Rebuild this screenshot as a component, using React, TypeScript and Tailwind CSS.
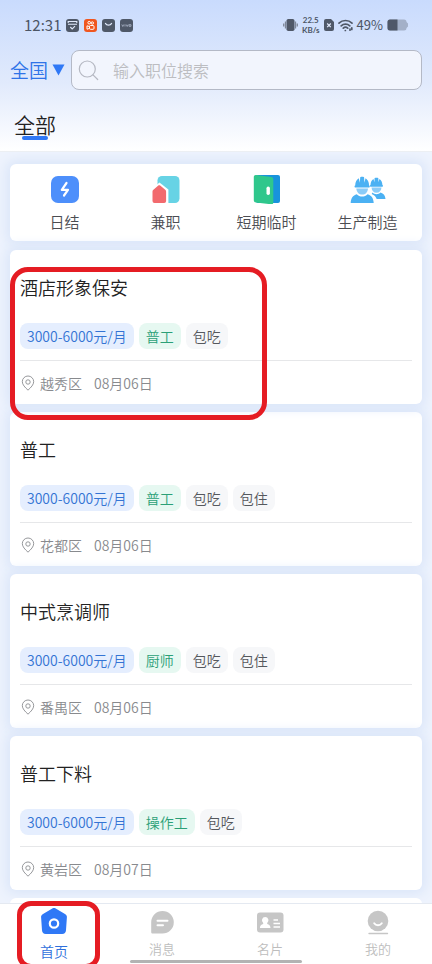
import type { ReactNode } from "react";

type Job = {
  title: string;
  salary: string;
  type: string;
  perks: string[];
  area: string;
  date: string;
  marked?: boolean;
};

const JOBS: Job[] = [
  { title: "酒店形象保安", salary: "3000-6000元/月", type: "普工", perks: ["包吃"], area: "越秀区", date: "08月06日", marked: true },
  { title: "普工", salary: "3000-6000元/月", type: "普工", perks: ["包吃", "包住"], area: "花都区", date: "08月06日" },
  { title: "中式烹调师", salary: "3000-6000元/月", type: "厨师", perks: ["包吃", "包住"], area: "番禺区", date: "08月06日" },
  { title: "普工下料", salary: "3000-6000元/月", type: "操作工", perks: ["包吃"], area: "黄岩区", date: "08月07日" },
];

const CATEGORIES: { label: string; icon: ReactNode }[] = [
  { label: "日结", icon: <BoltIcon /> },
  { label: "兼职", icon: <HouseIcon /> },
  { label: "短期临时", icon: <DoorIcon /> },
  { label: "生产制造", icon: <WorkersIcon /> },
];

const TABS: { label: string; icon: ReactNode; active?: boolean }[] = [
  { label: "首页", icon: <HomeTabIcon />, active: true },
  { label: "消息", icon: <MessageTabIcon /> },
  { label: "名片", icon: <CardTabIcon /> },
  { label: "我的", icon: <ProfileTabIcon /> },
];

function BoltIcon() {
  return (
    <svg className="h-7 w-9" viewBox="0 0 36 28" fill="none" aria-hidden="true">
      <rect x="4" y="0" width="28" height="27" rx="7" fill="#4d8ffb" />
      <path d="M19.500 7 14.800 13.800H21l-4 5.700" stroke="#fff" strokeWidth="2.200" strokeLinecap="round" strokeLinejoin="round" />
    </svg>
  );
}

function HouseIcon() {
  return (
    <svg className="h-7 w-9" viewBox="0 0 36 28" aria-hidden="true">
      <rect x="9.500" y="0" width="22" height="27" rx="4.500" fill="#67d3e5" />
      <path d="M3 28V13.500l8.500-6.900 8.900 7V28z" fill="#fff" />
      <path d="M4.500 15.600c0-.8.3-1.400.9-1.900l4.900-4.100c.6-.5 1.300-.5 1.900 0l5 4.100c.6.500.9 1.100.9 1.900V25a2 2 0 0 1-2 2H6.500a2 2 0 0 1-2-2z" fill="#f26a6e" />
    </svg>
  );
}

function DoorIcon() {
  return (
    <svg className="-mt-1 h-8 w-9" viewBox="0 0 36 32" aria-hidden="true">
      <rect x="7" y="3" width="24" height="28" rx="2" fill="#1893dc" />
      <path d="M4.800 5c0-1.400 1-2.200 2.400-2l15.100 2.100c1.300.2 2 1 2 2.300v23.100c0 1.300-.9 2-2.200 1.800L6.800 30.400c-1.300-.2-2-1-2-2.200z" fill="#2fc78c" />
      <rect x="17.500" y="14.500" width="3.400" height="8.500" rx="1.700" fill="#fff" />
    </svg>
  );
}

function WorkersIcon() {
  return (
    <svg className="h-7 w-9" viewBox="0 0 36 28" aria-hidden="true">
      <g fill="#4bb1f3">
        <path d="M20.500 9c.1-2.800 1.200-4.900 3-5.900l.9 3.200.2-4.300c1.100-.5 2.600-.5 3.700 0l.2 4.300.9-3.200c1.800 1 2.900 3.100 3 5.900.8.100.8 1.600 0 1.700H20.500c-.7-.1-.7-1.600 0-1.700z" />
        <path d="M21.500 11.500h10c-.3 3.200-2 5.300-5 5.300s-4.700-2.100-5-5.300z" fill="#8bccf8" />
        <path d="M22.500 16.500c2 2.300 6 2.300 8 0 3.100.8 4.800 3.300 5 6.500h-8.800c-.8-2.100-2.300-3.900-5-5z" />
      </g>
      <g fill="#4bb1f3">
        <path d="M5.200 9.500c.1-3.500 1.400-6 3.600-7.200l1.100 4.400.3-5.500c1.200-.6 2.700-.6 3.900 0l.3 5.500 1.100-4.400c2.200 1.200 3.500 3.700 3.600 7.200.9.100.9 1.900 0 2H5.200c-.9-.1-.9-1.900 0-2z" />
        <path d="M6.300 12.400h11.700c-.3 3.700-2.500 6.100-5.800 6.100s-5.600-2.400-5.900-6.100z" fill="#8bccf8" />
        <path d="M6.800 18.200c2.800 3.100 8 3.100 10.800 0 3.900 1 6 4.200 6.100 8.800H.7c.1-4.600 2.200-7.800 6.100-8.800z" />
      </g>
    </svg>
  );
}

function PinIcon() {
  return (
    <svg className="h-4 w-4 shrink-0" viewBox="0 0 16 16" fill="none" stroke="#8b8d91" strokeWidth="0.900" aria-hidden="true">
      <path d="M8 15.200C5 12.400 2.300 9.600 2.300 6.700a5.700 5.700 0 0 1 11.400 0c0 2.900-2.700 5.700-5.700 8.500z" />
      <circle cx="8" cy="7" r="2.200" />
    </svg>
  );
}

function HomeTabIcon() {
  return (
    <svg className="h-7 w-7" viewBox="0 0 28 28" aria-hidden="true">
      <path d="M12.300 1.500c1-.6 2.400-.6 3.400 0l9.300 5.400c1.400.8 2 1.800 1.900 3.300l-.9 13c-.1 2.400-1.500 3.800-3.800 3.800H5.800C3.500 27 2.100 25.600 2 23.200l-.9-13C1 8.700 1.600 7.700 3 6.900z" fill="#2f78f6" />
      <circle cx="14" cy="16.500" r="4.200" fill="none" stroke="#fff" strokeWidth="2.200" />
    </svg>
  );
}

function MessageTabIcon() {
  return (
    <svg className="h-7 w-7" viewBox="0 0 28 28" aria-hidden="true">
      <path d="M14.500 4a11.300 11.300 0 0 1 0 22.600H4.800c-1 0-1.600-.6-1.600-1.600v-9.700A11.300 11.300 0 0 1 14.500 4z" fill="#c6c6c6" />
      <path d="M9.500 13.700h10M9.500 18.200h5.500" stroke="#fff" strokeWidth="2" strokeLinecap="round" />
    </svg>
  );
}

function CardTabIcon() {
  return (
    <svg className="h-7 w-7" viewBox="0 0 28 28" aria-hidden="true">
      <rect x="1" y="5.500" width="26.500" height="20" rx="3" fill="#c6c6c6" />
      <path d="M9.200 10a3.300 3.300 0 0 1 2 5.900v1c1.900.6 3.300 1.500 3.300 4.100H3.900c0-2.600 1.400-3.500 3.300-4.100v-1a3.300 3.300 0 0 1 2-5.900z" fill="#fff" />
      <path d="M17.500 13h4.500M17.500 16.500h6.500M17.500 20h6.500" stroke="#fff" strokeWidth="1.400" />
    </svg>
  );
}

function ProfileTabIcon() {
  return (
    <svg className="h-7 w-7" viewBox="0 0 28 28" aria-hidden="true">
      <circle cx="14" cy="14" r="10.300" fill="#c6c6c6" />
      <path d="M10.200 16.300c1.700 2.600 5.900 2.600 7.600 0" fill="none" stroke="#fff" strokeWidth="1.900" strokeLinecap="round" />
      <path d="M5 26.500h18.500" stroke="#c6c6c6" strokeWidth="1.400" strokeLinecap="round" />
    </svg>
  );
}

function StatusBar() {
  return (
    <div className="flex h-[50px] items-center justify-between px-6 font-normal text-[#4c5565]">
      <div className="flex items-center gap-[5px]">
        <span className="text-[15px] leading-5">12:31</span>
        <svg className="h-[13px] w-[13px]" viewBox="0 0 13 13" aria-hidden="true">
          <rect width="13" height="13" rx="3" fill="#4f5868" />
          <path d="M2.200 4V2.500h8.600V4M2 5.300h9M4.300 8l1.900 1.900L9 7.200" fill="none" stroke="#e1e9fb" strokeWidth="1.100" />
        </svg>
        <svg className="h-[13px] w-[13px]" viewBox="0 0 13 13" aria-hidden="true">
          <rect width="13" height="13" rx="3" fill="#f0561f" />
          <g fill="none" stroke="#fff" strokeWidth="1">
            <circle cx="5.200" cy="3.700" r="1.300" />
            <circle cx="8.300" cy="4" r="1.200" />
            <rect x="5.500" y="6.500" width="4.500" height="3.800" rx="1" />
            <path d="M5.500 7.600 3 6.800v3.400l2.500-.8" />
          </g>
        </svg>
        <svg className="h-[13px] w-[13px]" viewBox="0 0 13 13" aria-hidden="true">
          <rect width="13" height="13" rx="3" fill="#4f5868" />
          <path d="M3.500 4.500c1.200 2.200 4.800 2.200 6 0" fill="none" stroke="#e1e9fb" strokeWidth="1.400" strokeLinecap="round" />
        </svg>
        <svg className="h-[13px] w-[13px]" viewBox="0 0 13 13" aria-hidden="true">
          <rect width="13" height="13" rx="3" fill="#4f5868" />
          <path d="m1.800 5.500 1 2 1-2M5 5.500v2M6.200 5.500l1 2 1-2M9 5.700h2v1.600H9z" fill="none" stroke="#b9c3d6" strokeWidth="0.700" />
        </svg>
      </div>

      <div className="flex items-center gap-1">
        <svg className="h-[14px] w-[15px]" viewBox="0 0 15 14" aria-hidden="true">
          <rect x="3.500" y="1" width="8" height="12" rx="1.800" fill="#4f5868" />
          <path d="M2.500 3.500v7M12.500 3.500v7M.7 5.500v3M14.300 5.500v3" stroke="#7d8799" strokeWidth="1.300" />
        </svg>
        <div className="flex flex-col items-center font-['Lato',sans-serif] text-[8px] leading-[10px] font-bold">
          <span>22.5</span>
          <span>KB/s</span>
        </div>
        <svg className="h-[12px] w-[10px]" viewBox="0 0 10 12" aria-hidden="true">
          <path d="M2 0h5l3 3v7a2 2 0 0 1-2 2H2a2 2 0 0 1-2-2V2a2 2 0 0 1 2-2z" fill="#4f5868" />
          <path d="m3.200 4.500 3.600 3.600m0-3.600L3.200 8.100" stroke="#e1e9fb" strokeWidth="1.200" />
        </svg>
        <svg className="h-[13px] w-[15px]" viewBox="0 0 15 13" fill="none" stroke="#4f5868" strokeWidth="1.700" strokeLinecap="round" aria-hidden="true">
          <path d="M1 4.200c3.600-3.600 9.400-3.600 13 0M3.200 6.800c2.400-2.300 6.200-2.300 8.600 0M5.300 9.200c1.300-1.200 3.100-1.200 4.400 0" />
          <path d="M7.300 11.500h.1M12 10v1.200M13.800 8.800v1.700" />
        </svg>
        <span className="text-[13px] leading-5">49%</span>
        <svg className="h-[12px] w-[21px]" viewBox="0 0 21 12" aria-hidden="true">
          <path d="M3 .5h14a2.500 2.500 0 0 1 2.500 2.500l1.500 1.500v3L19.500 9a2.500 2.500 0 0 1-2.500 2.500H3A2.500 2.500 0 0 1 .5 9V3A2.500 2.500 0 0 1 3 .5z" fill="#a3b0c8" />
          <path d="M3 .5h7.500v11H3A2.500 2.500 0 0 1 .5 9V3A2.500 2.500 0 0 1 3 .5z" fill="#4f5868" />
        </svg>
      </div>
    </div>
  );
}

function Header() {
  return (
    <header className="h-[151px] shrink-0 bg-linear-to-b from-[#c9dbfd] via-[#e1eafc] via-55% to-white">
      <StatusBar />
      <div className="flex items-center gap-1.5 px-2.5">
        <button type="button" className="flex shrink-0 items-center gap-1 text-[19px] leading-7 text-[#2f73e8]">
          全国
          <svg className="h-3 w-[13px]" viewBox="0 0 13 12" aria-hidden="true">
            <path d="M.5.500h12L6.500 11.500z" fill="#2f78f6" />
          </svg>
        </button>
        <label className="flex h-10 min-w-0 flex-1 items-center gap-3.5 rounded-lg border border-[#b4b9c6] bg-[#f2f5fd] px-1.5">
          <svg className="h-[21px] w-[21px] shrink-0" viewBox="0 0 21 21" fill="none" stroke="#b5b8c2" strokeWidth="1.200" strokeLinecap="round" aria-hidden="true">
            <circle cx="9.300" cy="9" r="8" />
            <path d="m15 14.800 4.700 4.700" />
          </svg>
          <input
            type="search"
            aria-label="搜索职位"
            placeholder="输入职位搜索"
            className="min-w-0 flex-1 bg-transparent text-base outline-none placeholder:text-[#bcbdc1]"
          />
        </label>
      </div>
      <div className="px-3.5 pt-5">
        <button type="button" className="flex flex-col items-center text-[21px] leading-7 text-[#222]">
          全部
          <span className="-mt-0.5 h-1 w-[26px] rounded-full bg-[#2f78f6]" />
        </button>
      </div>
    </header>
  );
}

function JobCard({ job }: { job: Job }) {
  return (
    <article className="rounded-md bg-white px-2.5 pt-[23px] shadow-[0_0_12px_4px_#dbe6f9]">
      <h2 className="text-lg leading-7 text-[#222]">{job.title}</h2>
      <div className="mt-[22px] flex gap-[5px] text-sm leading-[26px]">
        <span className="rounded-lg bg-[#e5eefe] px-[7px] text-[#3474d4]">{job.salary}</span>
        <span className="rounded-lg bg-[#e6f8f1] px-[7px] text-[#2ba077]">{job.type}</span>
        {job.perks.map((perk) => (
          <span key={perk} className="rounded-lg bg-[#f6f7f9] px-[7px] text-[#55585d]">
            {perk}
          </span>
        ))}
      </div>
      <div className="mt-[11px] flex h-11 items-center border-t border-[#e6e7e9] text-sm text-[#888a8e]">
        <PinIcon />
        <span className="ml-1">{job.area}</span>
        <span className="ml-3">{job.date}</span>
      </div>
    </article>
  );
}

function TabBar() {
  return (
    <nav className="relative z-20 grid h-[61px] shrink-0 grid-cols-4 border-t border-[#e4e9f1] bg-white">
      {TABS.map(({ label, icon, active }) => (
        <a
          key={label}
          href="#"
          aria-current={active ? "page" : undefined}
          className={
            active
              ? "flex flex-col items-center gap-1.5 pt-[3px] text-sm leading-5 text-[#2f6fdc]"
              : "flex flex-col items-center gap-1 pt-[3px] text-[13px] leading-5 text-[#bdbdbd]"
          }
        >
          {icon}
          {label}
        </a>
      ))}
      <div className="absolute bottom-px left-1/2 h-[3px] w-[172px] -translate-x-1/2 rounded-full bg-[#b3b3b3]" />
      <div className="pointer-events-none absolute -top-[3px] left-[17px] h-[68px] w-[83px] rounded-[14px] border-5 border-[#e51c23]" />
    </nav>
  );
}

export default function App() {
  return (
    <div className="flex h-screen flex-col overflow-hidden bg-[#eef3fd] font-['Noto_Sans_CJK_SC',sans-serif] font-[350]">
      <Header />
      <main className="min-h-0 flex-1 overflow-hidden border-t border-[#eceff3] px-2.5 pt-3">
        <section className="grid grid-cols-4 rounded-md bg-white px-1 pt-3 pb-[7px] shadow-[0_0_12px_4px_#dbe6f9]">
          {CATEGORIES.map(({ label, icon }) => (
            <button key={label} type="button" className="flex flex-col items-center gap-1.5 text-[15px] leading-6 text-[#4b4d52]">
              {icon}
              {label}
            </button>
          ))}
        </section>
        <div className="mt-[9px] flex flex-col gap-2">
          {JOBS.map((job) => (
            <div key={job.title} className={job.marked ? "relative z-10" : "relative"}>
              <JobCard job={job} />
              {job.marked && (
                <div className="pointer-events-none absolute top-[17px] left-0 h-[153px] w-[257px] rounded-[18px] border-5 border-[#e51c23]" />
              )}
            </div>
          ))}
          <div className="relative h-10 rounded-md bg-white" />
        </div>
      </main>
      <TabBar />
    </div>
  );
}
